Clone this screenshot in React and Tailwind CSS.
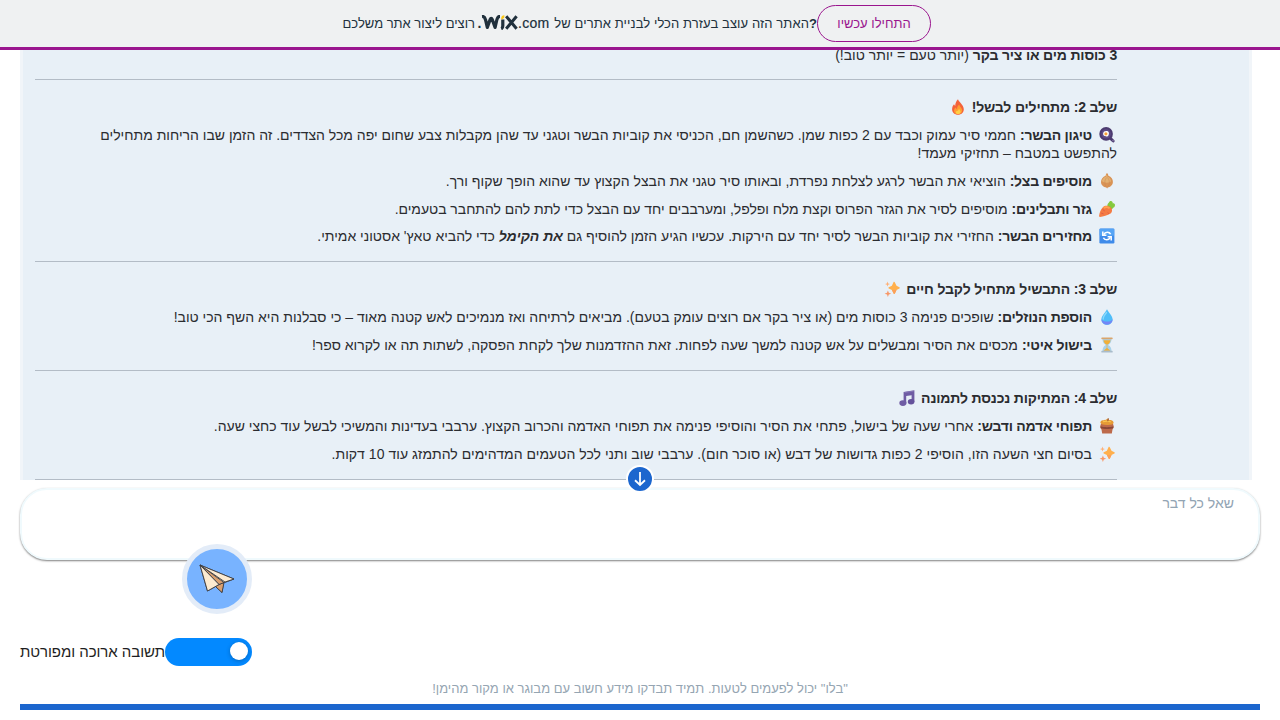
const ICONS = {
  fire: (
    <>
      <path d="M8 0.3C8.6 3 13.6 5.5 13.8 10.3C13.8 13.6 11.2 15.8 8 15.8C4.8 15.8 2.1 13.6 2.1 10.3C2.1 8 3 6.2 4 5.2C4.6 6 4.8 6.6 5.2 7C5.2 4.5 6.3 1.8 8 0.3Z" fill="#f4633a" />
      <path d="M9.3 5.5C9.6 8 12.3 9 12.2 11.6C12 14.2 10.2 15.3 8 15.3C5.5 15.3 4 13.6 4.1 11.4C4.2 10 5 9 5.7 8.6C6 9.5 6.4 10 7 10.2C7 8.3 7.8 6.5 9.3 5.5Z" fill="#ff9d33" />
      <path d="M9 9.5C9.3 10.8 10.7 11.4 10.6 13C10.4 14.4 9.3 15 8.1 15C6.7 15 5.7 14.1 5.8 12.9C6 12.2 6.5 11.9 7.3 11.9C8.2 11.7 8.7 10.6 9 9.5Z" fill="#ffd045" />
    </>
  ),
  pan: (
    <>
      <path d="M11.4 11.4L14.2 14" stroke="#4c3b70" strokeWidth="2.8" strokeLinecap="round" />
      <circle cx="7.1" cy="6.9" r="6.8" fill="#4c3b70" />
      <circle cx="7.1" cy="6.9" r="4.7" fill="#5f4b87" />
      <path d="M4.4 5.5C5 3.6 7 4.3 8.2 4C9.9 4.2 10.3 6.4 9.6 7.9C9.2 9.6 7.2 10 6 9.1C4.4 8.8 3.6 7.2 4.4 5.5Z" fill="#fff" />
      <circle cx="6.9" cy="6.8" r="1.6" fill="#f9a13a" />
      <circle cx="14" cy="13.7" r="0.6" fill="#a99bc7" />
    </>
  ),
  onion: (
    <>
      <path d="M7.2 0.4L8.8 0.4L9.4 2.8C12.4 3.8 14 6.2 13.9 9C13.8 12.2 11.2 14.2 8.8 14.4L8.2 15.4L7.3 14.4C4.6 14.2 2 12.2 2 9C2 6.2 3.8 3.8 6.6 2.8Z" fill="#d99355" />
      <path d="M7.4 1L8.4 3.5C10.9 4.6 12.2 6.6 12 8.6C8.8 10.6 4.8 10 2.9 8.1C3.3 6.1 5 4.2 7.1 3.5Z" fill="#e3b071" />
      <path d="M7.7 4.5C5.3 7 5.3 11 7.3 14M8.3 4.5C10.9 7 10.9 11 8.8 14" fill="none" stroke="#c98650" strokeWidth="0.5" />
    </>
  ),
  carrot: (
    <>
      <path d="M8.6 6.8C8 4.6 8.6 2.2 9.8 1.8C10.2 0 12.6 -0.4 13.3 0.8C13.8 1.4 13.8 1.8 13.5 2.3C14.7 2 16 2.6 16 4C15.9 5.5 15.2 6.6 14.1 6.8C13.2 8.8 10.6 9 8.6 6.8Z" fill="#86c93e" />
      <path d="M3.9 6.3C6 4.2 9.6 4.5 11.8 6.5C13.7 8.4 13.4 11.2 11.6 12.6C8.6 14.6 4.2 15.7 1 15.9C0.2 15.9 0 15.4 0.1 14.7C0.6 11.4 1.8 8.4 3.9 6.3Z" fill="#f47b43" />
      <path d="M3.6 8.5L5.8 10M2.2 12L4.6 13M8.6 11.6L10 12.8" stroke="#dc5347" strokeWidth="0.8" />
      <path d="M4.8 7.2C6.6 5.4 9.2 5.8 10.6 7.4" stroke="#ffa34d" strokeWidth="1.8" fill="none" />
    </>
  ),
  cycle: (
    <>
      <rect x="0.4" y="0.4" width="15" height="15" rx="1.2" fill="#3f8bea" />
      <rect x="0.7" y="0.7" width="14.4" height="7" rx="1" fill="#55a4f5" />
      <path d="M3.8 3.5V7.2H7.4M12.2 12.4V8.7H8.6" fill="none" stroke="#fff" strokeWidth="1.5" />
      <path d="M4.7 6.6C6.3 3.4 10.4 3.5 11.6 6.2M11.3 9.3C9.7 12.5 5.6 12.4 4.4 9.7" fill="none" stroke="#fff" strokeWidth="1.6" />
    </>
  ),
  sparkles: (
    <>
      <path d="M9.7 0.8Q10.4 0.3 10.9 1.4L12.5 4.8L15.4 6.2Q16.2 6.9 15.4 7.6L12.5 9L10.9 12.6Q10.3 13.5 9.6 12.6L7.9 9L4.8 7.6Q4 6.9 4.8 6.2L7.9 4.8Z" fill="#ffb04d" />
      <path d="M3.5 0.6L4.2 2.4L6 3.1L4.2 3.8L3.5 5.6L2.8 3.8L1 3.1L2.8 2.4Z" fill="#ffb077" />
      <path d="M3.9 9.4L4.8 11.8L7.2 12.7L4.8 13.6L3.9 15.9L3 13.6L0.6 12.7L3 11.8Z" fill="#f79767" />
      <path d="M7.9 9L9.6 12.6Q10.3 13.5 10.9 12.6L12.5 9Z" fill="#fba05a" />
    </>
  ),
  drop: (
    <>
      <path d="M8 0.3C9.7 3.4 13.5 7 13.6 10.4C13.6 13.5 11.1 15.7 8 15.7C4.9 15.7 2.4 13.5 2.4 10.4C2.5 7 6.3 3.4 8 0.3Z" fill="#4fbdf8" />
      <path d="M2.5 10C3 13.4 13 13.4 13.5 10C13.8 13.4 11 15.7 8 15.7C5 15.7 2.2 13.4 2.5 10Z" fill="#7486f6" />
      <path d="M7.5 3.5C5.5 6 4 8.3 4.2 10" fill="none" stroke="#89d9fb" strokeWidth="1.3" strokeLinecap="round" />
    </>
  ),
  hourglass: (
    <>
      <path d="M3.5 1.6H12.5C12.6 5 11.5 6.7 9.2 8C11.5 9.3 12.6 11 12.5 14.4H3.5C3.4 11 4.5 9.3 6.8 8C4.5 6.7 3.4 5 3.5 1.6Z" fill="#a9d2ea" />
      <path d="M4.5 3.2H11.5C11.3 5.6 10 6.7 8.3 7.6V11L11.5 13.8H4.5L7.7 11V7.6C6 6.7 4.7 5.6 4.5 3.2Z" fill="#f1af37" />
      <rect x="2.3" y="0.5" width="11.4" height="1.8" rx="0.7" fill="#d9a56d" />
      <rect x="2.3" y="13.8" width="11.4" height="1.8" rx="0.7" fill="#a9bccb" />
    </>
  ),
  notes: (
    <>
      <path d="M4.6 1.9L15.4 0.3V12H12.6V5.2L7.2 6V13.3H4.6Z" fill="#6f5ca4" />
      <ellipse cx="3.9" cy="13.1" rx="3.6" ry="2.8" fill="#6f5ca4" />
      <ellipse cx="12.1" cy="11.7" rx="3.3" ry="2.7" fill="#65529b" />
      <path d="M5.6 2.5L14.7 1.1" stroke="#8c7cba" strokeWidth="0.8" />
    </>
  ),
  honey: (
    <>
      <path d="M3 4.8H13C15.3 7.1 15 10 13.5 11.5L12.8 15.6H3.2L2.5 11.5C1 10 0.7 7.1 3 4.8Z" fill="#bd6a4b" />
      <path d="M1.6 8.3C5 9.5 11 9.5 14.4 8.3V10C11 11.3 5 11.3 1.6 10Z" fill="#8a4738" />
      <path d="M1.3 4.2C2.3 1.5 5 2.4 6.8 1.7L9.2 0.2L10 2C12.5 2 14.2 2.6 14.6 4.4C14.7 6 12.7 6.9 8 6.9C3.6 6.9 1.3 5.8 1.3 4.2Z" fill="#e69a36" />
      <path d="M4 3.7C6 2.8 10 2.8 11.8 3.9" stroke="#f9c550" strokeWidth="1.2" fill="none" />
      <path d="M9.3 0.4L8.8 3.2" stroke="#8a4738" strokeWidth="1" />
    </>
  ),
};

function Emoji({ name, className = "mr-[2px] ml-[7px]" }) {
  return (
    <svg viewBox="0 0 16 16" className={`inline-block size-4 align-[-3px] ${className}`} aria-hidden="true">
      {ICONS[name]}
    </svg>
  );
}

function Step({ icon, title, children, className = "" }) {
  return (
    <p className={`mb-[9.8px] ${className}`}>
      <Emoji name={icon} />
      {title && <b className="tracking-[-0.25px]">{title}</b>}
      {title && " "}
      {children}
    </p>
  );
}

function Heading({ icon, children }) {
  return (
    <p className="mb-[10px] font-bold tracking-[-0.17px]">
      {children}
      <Emoji name={icon} className="mr-[6px]" />
    </p>
  );
}

function Section({ children }) {
  return <section className="border-b border-[#b3bcc6] pt-[18px] pb-[6.2px]">{children}</section>;
}

function WixLogo() {
  return (
    <svg viewBox="0 0 37 15" className="-mt-[3px] h-[15px] w-[37px]" fill="none" stroke="#20303c" aria-label="Wix">
      <path d="M1 1.4C3.2 1.2 4 2.6 4.6 5L6.3 12.4L9.2 4.4C9.7 2.9 10.7 2.9 11.2 4.4L14.1 12.4L15.8 5C16.4 2.6 17 1.4 19 1.4" strokeWidth="3.2" strokeLinejoin="round" />
      <path d="M21.8 4.4V10.7C21.8 12.5 21.5 13.3 20.2 13.8" strokeWidth="3.2" />
      <path d="M20.2 3.2C20.3 1.3 21.2 0.4 23.4 0.2V2C23.2 3.2 22 3.8 20.2 4.4Z" fill="#fbc917" stroke="none" />
      <path d="M25.2 1.2L35.6 13.8M35.6 1.2L25.2 13.8" strokeWidth="3" />
    </svg>
  );
}

function Banner() {
  return (
    <header className="flex h-[50px] shrink-0 border-b-3 border-[#9a158e] bg-[#eff1f2] pl-[343px] text-[13px] text-[#20303c]">
      <div className="flex h-[47px] w-[474px] items-center whitespace-nowrap">
        <span dir="rtl" className="w-[132px]">רוצים ליצור אתר משלכם</span>
        <b className="w-[6px] pl-[2.5px] text-[14px]">.</b>
        <WixLogo />
        <span className="w-[36px] text-[14px] font-medium tracking-[0.3px] [-webkit-text-stroke:0.2px_#20303c]">.com</span>
        <span dir="rtl" className="w-[255px] tracking-[0.09px]">האתר הזה עוצב בעזרת הכלי לבניית אתרים של</span>
        <b className="w-2">?</b>
      </div>
      <button className="mt-[5px] h-[37px] w-[114px] rounded-full border border-[#9a158e] pt-px text-[13px] text-[#9a158e]">
        התחילו עכשיו
      </button>
    </header>
  );
}

function PaperPlane() {
  return (
    <svg viewBox="0 0 36 30" className="h-[30px] w-9" stroke="#393b42" strokeLinejoin="round" strokeWidth="0.9">
      <path d="M1 1L35 15L24.5 19L23 28.5L16.5 22.5L8.5 27Z" fill="#fdebd0" />
      <path d="M25 18.5L23 28.5L16.5 22.5L20 20.5Z" fill="#daa06f" />
      <path d="M1 1L25 18.5L20 20.5Z" fill="#daa06f" />
      <path d="M1 1L8.5 27L20 20.5Z" fill="#fdebd0" />
      <path d="M1 1L35 15L26 18Z" fill="#fdebd0" />
    </svg>
  );
}

export default function App() {
  return (
    <div className="flex h-[720px] flex-col overflow-hidden bg-white font-['Liberation_Sans',Arial,sans-serif]">
      <Banner />
      <main className="relative mr-7 ml-5 h-[430px] shrink-0 border-x-3 border-[#f1f5f9] bg-[#e8f0f7]">
        <div className="h-full overflow-hidden">
          <div dir="rtl" className="-mt-1 mr-[132px] ml-3 text-[14px] leading-[18px] text-[#2b2c30]">
            <p className="h-[34px] border-b border-[#b3bcc6]">
              <b className="tracking-[-0.17px]">3 כוסות מים או ציר בקר</b> (יותר טעם = יותר טוב!)
            </p>
            <Section>
              <Heading icon="fire">שלב 2: מתחילים לבשל!</Heading>
              <Step icon="pan" title="טיגון הבשר:">
                חממי סיר עמוק וכבד עם 2 כפות שמן. כשהשמן חם, הכניסי את קוביות הבשר וטגני עד שהן מקבלות צבע שחום יפה מכל הצדדים. זה הזמן שבו הריחות מתחילים<br />להתפשט במטבח – תחזיקי מעמד!
              </Step>
              <Step icon="onion" title="מוסיפים בצל:">
                הוציאי את הבשר לרגע לצלחת נפרדת, ובאותו סיר טגני את הבצל הקצוץ עד שהוא הופך שקוף ורך.
              </Step>
              <Step icon="carrot" title="גזר ותבלינים:" className="tracking-[-0.03px]">
                מוסיפים לסיר את הגזר הפרוס וקצת מלח ופלפל, ומערבבים יחד עם הבצל כדי לתת להם להתחבר בטעמים.
              </Step>
              <Step icon="cycle" title="מחזירים הבשר:">
                החזירי את קוביות הבשר לסיר יחד עם הירקות. עכשיו הגיע הזמן להוסיף גם <b><i>את הקימל</i></b> כדי להביא טאץ' אסטוני אמיתי.
              </Step>
            </Section>
            <Section>
              <Heading icon="sparkles">שלב 3: התבשיל מתחיל לקבל חיים</Heading>
              <Step icon="drop" title="הוספת הנוזלים:">
                שופכים פנימה 3 כוסות מים (או ציר בקר אם רוצים עומק בטעם). מביאים לרתיחה ואז מנמיכים לאש קטנה מאוד – כי סבלנות היא השף הכי טוב!
              </Step>
              <Step icon="hourglass" title="בישול איטי:">
                מכסים את הסיר ומבשלים על אש קטנה למשך שעה לפחות. זאת ההזדמנות שלך לקחת הפסקה, לשתות תה או לקרוא ספר!
              </Step>
            </Section>
            <Section>
              <Heading icon="notes">שלב 4: המתיקות נכנסת לתמונה</Heading>
              <Step icon="honey" title="תפוחי אדמה ודבש:">
                אחרי שעה של בישול, פתחי את הסיר והוסיפי פנימה את תפוחי האדמה והכרוב הקצוץ. ערבבי בעדינות והמשיכי לבשל עוד כחצי שעה.
              </Step>
              <Step icon="sparkles" className="tracking-[0.035px]">
                בסיום חצי השעה הזו, הוסיפי 2 כפות גדושות של דבש (או סוכר חום). ערבבי שוב ותני לכל הטעמים המדהימים להתמזג עוד 10 דקות.
              </Step>
            </Section>
          </div>
        </div>
        <button aria-label="גלילה למטה" className="absolute bottom-[-13px] left-[603px] flex size-7 items-center justify-center rounded-full border-2 border-white bg-[#1c66ce]">
          <svg viewBox="0 0 24 24" className="size-5 shrink-0" fill="none" stroke="white" strokeWidth="2.1">
            <path d="M12 3.5V19M6 13.5L12 19.2L18 13.5" />
          </svg>
        </button>
      </main>
      <div dir="rtl" className="mx-5 mt-2 h-[72px] shrink-0 rounded-[27px] border-2 border-[#f0fafd] bg-white pt-1 pr-6 text-[14px] leading-[18px] text-[#92a4b3] shadow-[0_1px_2px_rgba(0,0,0,0.5)]">
        שאל כל דבר
      </div>
      <button aria-label="שליחה" className="relative -mt-4 ml-[182px] flex size-[70px] shrink-0 items-center justify-center rounded-full border-5 border-[#e3ecf8] bg-[#78b3ff]">
        <PaperPlane />
      </button>
      <div className="mt-6 ml-5 flex h-7 shrink-0 items-center">
        <span dir="rtl" className="-mt-px w-[145px] text-[15px] leading-6 tracking-[-0.04px] whitespace-nowrap text-[#1e1e22]">תשובה ארוכה ומפורטת</span>
        <span role="switch" aria-checked="true" className="flex h-7 w-[87px] items-center justify-end rounded-full bg-[#0389ff] pr-1">
          <span className="mt-[-2px] size-[18px] rounded-full bg-white shadow-[0_1px_4px_rgba(0,0,0,0.25)]" />
        </span>
      </div>
      <footer className="mx-5 mt-[14px] h-[30px] shrink-0 border-b-6 border-[#1c66ce] text-center text-[13px] leading-[18px] text-[#95a5b2]" dir="rtl">
        "בלו" יכול לפעמים לטעות. תמיד תבדקו מידע חשוב עם מבוגר או מקור מהימן!
      </footer>
    </div>
  );
}
